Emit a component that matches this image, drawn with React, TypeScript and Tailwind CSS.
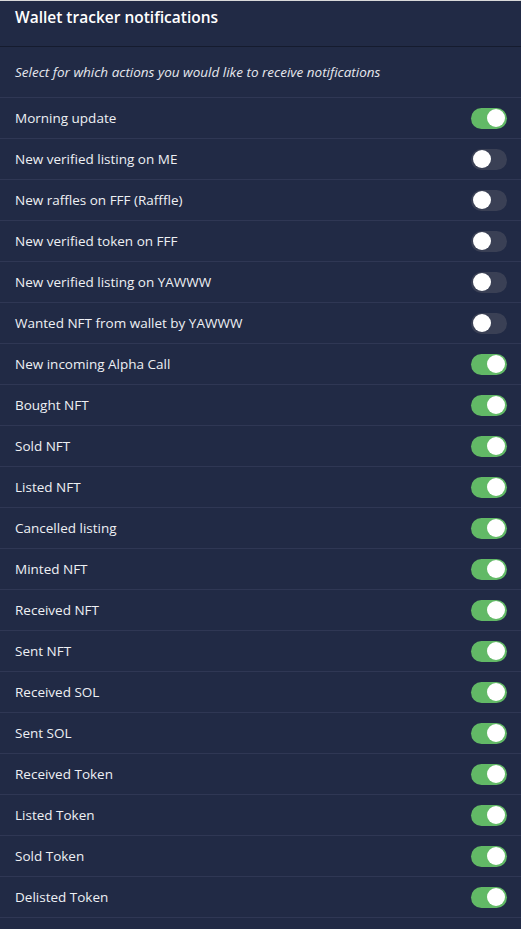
import React from 'react';

const ITEMS = [
  { label: 'Morning update', on: true },
  { label: 'New verified listing on ME', on: false },
  { label: 'New raffles on FFF (Rafffle)', on: false },
  { label: 'New verified token on FFF', on: false },
  { label: 'New verified listing on YAWWW', on: false },
  { label: 'Wanted NFT from wallet by YAWWW', on: false },
  { label: 'New incoming Alpha Call', on: true },
  { label: 'Bought NFT', on: true },
  { label: 'Sold NFT', on: true },
  { label: 'Listed NFT', on: true },
  { label: 'Cancelled listing', on: true },
  { label: 'Minted NFT', on: true },
  { label: 'Received NFT', on: true },
  { label: 'Sent NFT', on: true },
  { label: 'Received SOL', on: true },
  { label: 'Sent SOL', on: true },
  { label: 'Received Token', on: true },
  { label: 'Listed Token', on: true },
  { label: 'Sold Token', on: true },
  { label: 'Delisted Token', on: true },
];

function Toggle({ on, onClick }: { on: boolean; onClick: () => void }) {
  return (
    <button
      onClick={onClick}
      className={
        'flex h-[21px] w-[36px] items-center rounded-full px-[2px] ' +
        (on ? 'justify-end bg-[#62b966]' : 'justify-start bg-[#3a4055]')
      }
    >
      <span className="h-[18px] w-[18px] rounded-full bg-white" />
    </button>
  );
}

export default function App() {
  const [items, setItems] = React.useState(ITEMS);

  const flip = (i: number) =>
    setItems((prev) => prev.map((it, j) => (j === i ? { ...it, on: !it.on } : it)));

  return (
    <div
      className="min-h-[929px] w-full border-t border-[#d9d9d9] bg-[#212a45] text-white"
      style={{ fontFamily: '"Open Sans", "Noto Sans", sans-serif' }}
    >
      <div className="h-[46px] border-b border-[#151b2e] px-[15px] pt-[5px]">
        <h2 className="text-[15.5px] font-semibold">Wallet tracker notifications</h2>
      </div>
      <div className="flex h-[51px] items-center border-b border-[#2f3754] px-[15px]">
        <p className="text-[13.5px] italic text-[#e6e8ee]">
          Select for which actions you would like to receive notifications
        </p>
      </div>
      {items.map((item, i) => (
        <div
          key={item.label}
          className="flex h-[41px] items-center justify-between border-b border-[#2f3754] pl-[15px] pr-[14px]"
        >
          <span className="text-[13.5px] text-[#eef0f4]">{item.label}</span>
          <Toggle on={item.on} onClick={() => flip(i)} />
        </div>
      ))}
    </div>
  );
}
